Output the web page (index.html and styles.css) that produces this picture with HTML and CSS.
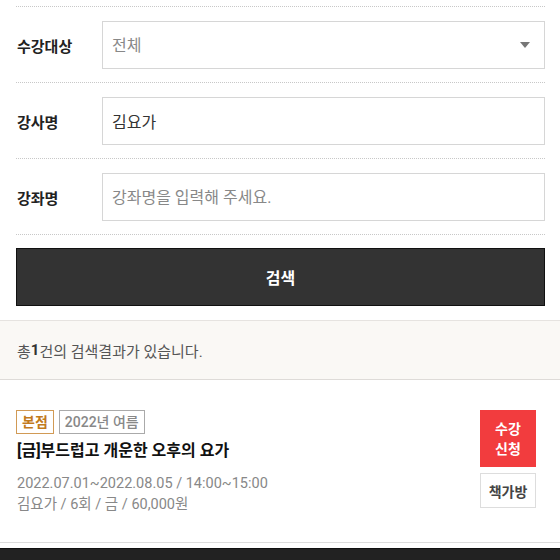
FILE: index.html
```html
<!DOCTYPE html>
<html lang="ko">
<head>
  <meta charset="UTF-8" />
  <meta name="viewport" content="width=device-width, initial-scale=1.0"/>
  <title>강좌검색</title>
  <link rel="stylesheet" href="styles.css">
</head>
<body>
  <!-- Search Form -->
  <form class="search-form">
    <div class="form-row">
      <label for="target">수강대상</label>
      <div class="select-box">
        <select id="target" name="target">
          <option>전체</option>
        </select>
        <span class="select-arrow"></span>
      </div>
    </div>
    <div class="form-row">
      <label for="teacher">강사명</label>
      <input type="text" id="teacher" name="teacher" value="김요가" />
    </div>
    <div class="form-row">
      <label for="course">강좌명</label>
      <input type="text" id="course" name="course" placeholder="강좌명을 입력해 주세요." />
    </div>
    <div class="form-submit">
      <button type="submit" class="search-button">검색</button>
    </div>
  </form>

  <!-- Result Count -->
  <div class="result-count">총<strong>1</strong>건의 검색결과가 있습니다.</div>

  <!-- Result List -->
  <ul class="result-list">
    <li class="result-item">
      <div class="result-info">
        <div class="badges">
          <span class="badge badge-branch">본점</span>
          <span class="badge badge-term">2022년 여름</span>
        </div>
        <h3 class="course-title">[금]부드럽고 개운한 오후의 요가</h3>
        <p class="course-meta">2022.07.01~2022.08.05 / 14:00~15:00</p>
        <p class="course-meta">김요가 / 6회 / 금 / 60,000원</p>
      </div>
      <div class="result-actions">
        <button type="button" class="apply-button">수강<br>신청</button>
        <button type="button" class="cart-button">책가방</button>
      </div>
    </li>
  </ul>

  <footer class="footer"></footer>
</body>
</html>
```

FILE: styles.css
```css
/* Base */
body {
  margin: 0;
  font-family: Roboto, "Noto Sans CJK KR", sans-serif;
  color: #333;
  background: #fff;
}

/* Search Form */
.search-form {
  padding: 6px 15px 0 16px;
  margin: 0;
}
.form-row {
  display: grid;
  grid-template-columns: 86px 1fr;
  align-items: center;
  padding: 14px 0 13px;
  border-top: 1px dotted #c8c8c8;
}
.form-row label {
  font-size: 15px;
  font-weight: bold;
  color: #222;
  padding-left: 1px;
}
.form-row input,
.form-row select {
  width: 100%;
  height: 48px;
  box-sizing: border-box;
  padding: 0 9px;
  border: 1px solid #d6d6d6;
  border-radius: 0;
  background: #fff;
  font-family: inherit;
  font-size: 16px;
  color: #333;
  outline: none;
}
.form-row input::placeholder {
  color: #888;
}
.select-box {
  position: relative;
}
.form-row select {
  appearance: none;
  -webkit-appearance: none;
  color: #888;
}
.select-arrow {
  position: absolute;
  right: 15px;
  top: 21px;
  width: 0;
  height: 0;
  border-left: 5px solid transparent;
  border-right: 5px solid transparent;
  border-top: 6px solid #777;
  pointer-events: none;
}
.form-submit {
  border-top: 1px dotted #c8c8c8;
  padding-top: 13px;
}
.search-button {
  display: block;
  width: 100%;
  height: 58px;
  background: #333;
  border: 1px solid #111;
  color: #fff;
  font-family: inherit;
  font-size: 16px;
  font-weight: bold;
  cursor: pointer;
}

/* Result Count */
.result-count {
  margin-top: 14px;
  height: 58px;
  display: flex;
  align-items: center;
  padding: 0 17px;
  background: #faf8f5;
  border-top: 1px solid #e6e3e0;
  border-bottom: 1px solid #dedbd8;
  font-size: 15px;
  color: #555;
}
.result-count strong {
  color: #333;
}

/* Result List */
.result-list {
  list-style: none;
  margin: 0;
  padding: 0;
}
.result-item {
  display: flex;
  justify-content: space-between;
  padding: 30px 24px 27px 16px;
  border-bottom: 1px solid #dcdcdc;
}
.badges {
  display: flex;
  gap: 5px;
}
.badge {
  height: 24px;
  line-height: 22px;
  box-sizing: border-box;
  padding: 0 5px;
  font-size: 14px;
  font-weight: bold;
}
.badge-branch {
  border: 1px solid #d19a55;
  color: #c27a1c;
}
.badge-term {
  border: 1px solid #aaa;
  color: #888;
  font-weight: 500;
}
.course-title {
  margin: 5px 0 10px;
  font-size: 16px;
  line-height: 24px;
  color: #111;
  padding-left: 1px;
}
.course-meta {
  margin: 0;
  font-size: 14.5px;
  line-height: 21px;
  color: #888;
  padding-left: 1px;
}
.result-actions {
  display: flex;
  flex-direction: column;
  gap: 6px;
  width: 56px;
}
.apply-button,
.cart-button {
  width: 56px;
  box-sizing: border-box;
  font-family: inherit;
  font-size: 14px;
  font-weight: bold;
  cursor: pointer;
  padding: 0;
}
.apply-button {
  height: 57px;
  line-height: 20px;
  background: #f23c3e;
  border: none;
  color: #fff;
}
.cart-button {
  height: 35px;
  background: #fff;
  border: 1px solid #ddd;
  color: #444;
}

/* Footer */
.footer {
  margin-top: 5px;
  height: 20px;
  background: #222;
  border-top: 1px solid #111;
}
```
